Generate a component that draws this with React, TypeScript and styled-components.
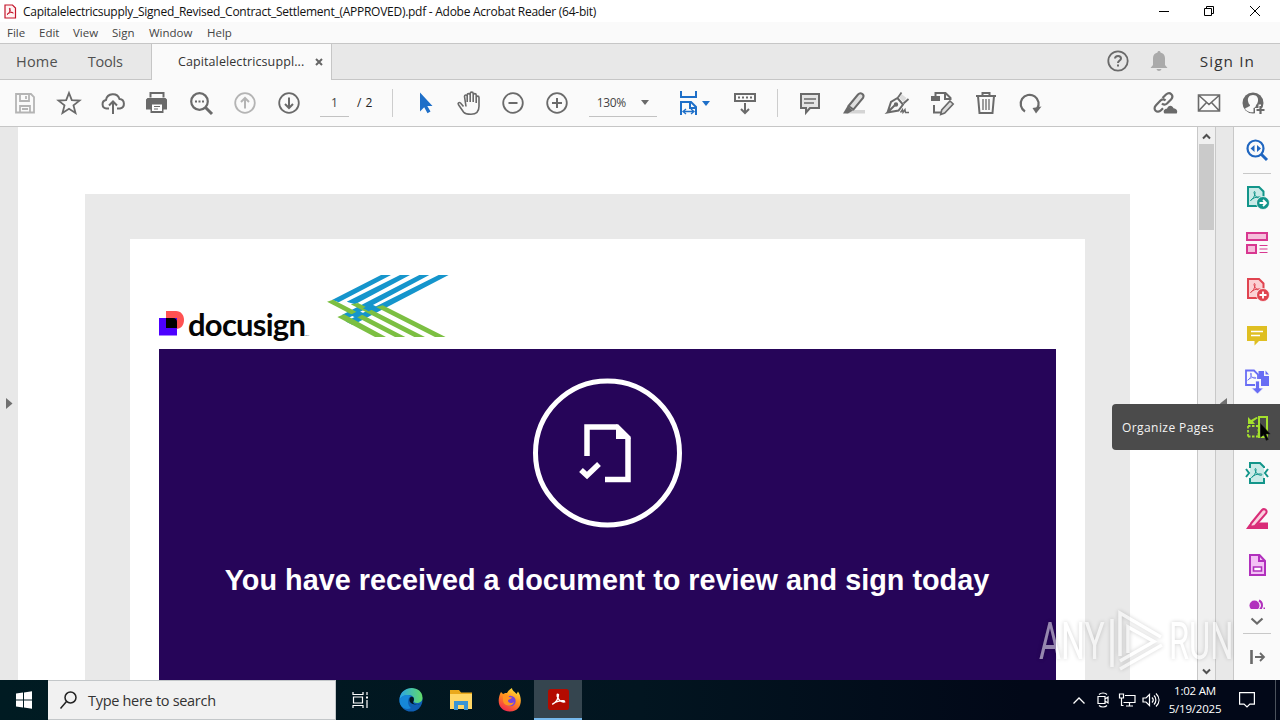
import React from "react";
import styled, { createGlobalStyle } from "styled-components";

const GlobalStyle = createGlobalStyle`
    * { box-sizing: border-box; }
    body {
        margin: 0;
        overflow: hidden;
        font-family: "Open Sans", "Noto Sans", sans-serif;
    }
    svg { display: block; flex: none; overflow: visible; }
`;

const Screen = styled.div`
    position: relative;
    display: flex;
    flex-direction: column;
    width: 1280px;
    height: 720px;
    overflow: hidden;
    background: #fff;
`;

const Text = styled.span<{ $size?: number; $spacing?: number; $color?: string }>`
    font-size: ${p => p.$size || 12}px;
    letter-spacing: ${p => p.$spacing || 0}px;
    color: ${p => p.$color || "#444"};
    line-height: 18px;
    white-space: pre;
`;

const Spacer = styled.div`
    flex: 1;
`;

/* title bar and menu */

const TitleBar = styled.div`
    display: flex;
    align-items: center;
    height: 22px;
    padding: 0 2px 0 4px;
`;

const Title = styled(Text)`
    margin-left: 7px;
    padding-top: 1px;
`;

const WindowButton = styled.div<{ $width?: number }>`
    display: flex;
    align-items: center;
    justify-content: center;
    width: ${p => p.$width || 46}px;
    height: 20px;
`;

const MenuBar = styled.div`
    display: flex;
    align-items: center;
    height: 22px;
    padding-left: 7px;
    background: #fafafa;
    border-bottom: 1px solid #c6c6c6;
`;

const MenuItem = styled(Text)<{ $width: number }>`
    width: ${p => p.$width}px;
`;

/* tabs */

const TabBar = styled.div`
    display: flex;
    height: 36px;
    background: #e8e8e8;
    border-bottom: 1px solid #c6c6c6;
`;

const NavTabs = styled.div`
    display: flex;
    align-items: center;
    gap: 30px;
    width: 152px;
    padding-left: 16px;
    border-right: 1px solid #c6c6c6;
`;

const DocumentTab = styled.div`
    display: flex;
    align-items: center;
    justify-content: space-between;
    width: 180px;
    height: 36px;
    padding: 0 8px 0 26px;
    background: #fafafa;
    border-right: 1px solid #c6c6c6;
`;

const Account = styled.div`
    display: flex;
    align-items: center;
    padding: 0 25px 2px 0;
`;

const AccountIcon = styled.div<{ $width: number }>`
    display: flex;
    width: ${p => p.$width}px;
`;

/* toolbar */

const Toolbar = styled.div`
    display: flex;
    align-items: center;
    height: 47px;
    padding: 0 5px 0 3px;
    background: #fafafa;
    border-bottom: 1px solid #c6c6c6;
`;

const ToolButton = styled.div<{ $width?: number }>`
    display: flex;
    align-items: center;
    justify-content: center;
    width: ${p => p.$width || 44}px;
    height: 40px;
`;

const FitButton = styled(ToolButton)`
    gap: 2px;
    padding-left: 10px;
`;

const Field = styled.div<{ $width: number }>`
    display: flex;
    align-items: center;
    justify-content: space-around;
    width: ${p => p.$width}px;
    height: 28px;
    border-bottom: 1px solid #c2c2c2;
`;

const PageField = styled(Field)`
    margin-left: 9px;
`;

const ZoomField = styled(Field)`
    margin-left: 10px;
`;

const PageCount = styled(Text)`
    width: 36px;
    padding-left: 8px;
`;

const Separator = styled.div<{ $left: number }>`
    width: 1px;
    height: 28px;
    margin: 0 10px 0 ${p => p.$left}px;
    background: #cdcdcd;
`;

/* document area */

const Body = styled.div`
    display: flex;
    height: 553px;
`;

const LeftRail = styled.div`
    display: flex;
    align-items: center;
    width: 18px;
    padding-left: 6px;
    background: #e8e8e8;
`;

const Viewport = styled.div`
    display: flex;
    width: 1179px;
    padding: 67px 67px 0;
    background: #fff;
    overflow: hidden;
`;

const Page = styled.div`
    flex: 1;
    padding: 45px 45px 0;
    background: #e9e9e9;
`;

const Letter = styled.div`
    height: 100%;
    padding: 34px 29px 0;
    background: #fff;
`;

const Logos = styled.div`
    display: flex;
    height: 76px;
`;

const DocusignName = styled.div`
    width: 136px;
    margin: 32px 0 0 4px;
    font-family: Lato, sans-serif;
    font-weight: 700;
    font-size: 31px;
    line-height: 38px;
    letter-spacing: -0.75px;
    color: #050505;
`;

const TradeMark = styled.sup`
    font-size: 2.5px;
    font-weight: 400;
    line-height: 0;
    letter-spacing: 0;
    vertical-align: baseline;
`;

const DocusignMark = styled.svg`
    margin-top: 38px;
`;

const StripesMark = styled.svg`
    margin-left: 1px;
`;

const Banner = styled.div`
    display: flex;
    flex-direction: column;
    align-items: center;
    height: 331px;
    padding-top: 29px;
    background: #260559;
`;

const Headline = styled.div`
    margin: 33px 1px 0 0;
    font: bold 28.8px/38px "Liberation Sans", Arial, sans-serif;
    color: #fff;
    white-space: nowrap;
`;

const ScrollTrack = styled.div`
    display: flex;
    flex-direction: column;
    align-items: center;
    justify-content: space-between;
    width: 19px;
    padding: 6px 0 5px;
    background: #f0f0f0;
    border-left: 1px solid #c8c8c8;
    border-right: 1px solid #c8c8c8;
`;

const ScrollThumb = styled.div`
    width: 15px;
    height: 86px;
    margin-top: 5px;
    background: #cacaca;
`;

const RightRail = styled.div`
    display: flex;
    align-items: center;
    width: 18px;
    padding-left: 4px;
    background: #e8e8e8;
    border-right: 1px solid #c8c8c8;
`;

const ToolPane = styled.div`
    width: 46px;
    background: #fafafa;
`;

const PaneItem = styled.div<{ $height?: number }>`
    display: flex;
    align-items: center;
    justify-content: center;
    height: ${p => p.$height || 46}px;
`;

const ActiveItem = styled(PaneItem)`
    position: relative;
    background: #4b4b4b;
`;

const ClippedItem = styled.div`
    display: flex;
    justify-content: center;
    height: 21px;
    padding-top: 12px;
    overflow: hidden;
`;

const Tooltip = styled.div`
    position: absolute;
    right: 46px;
    top: 0;
    display: flex;
    align-items: center;
    width: 122px;
    height: 46px;
    padding: 2px 0 0 10px;
    background: #4b4b4b;
    border-radius: 4px 0 0 4px;
`;

const Pointer = styled.svg`
    position: absolute;
    left: 26px;
    top: 19px;
`;

const PaneRule = styled.div`
    height: 1px;
    margin: 0 9px;
    background: #c8c8c8;
`;

const Watermark = styled.div`
    position: absolute;
    left: 1039px;
    top: 608px;
    display: flex;
    align-items: center;
    justify-content: space-between;
    width: 194px;
    height: 66px;
    opacity: 0.52;
    filter: drop-shadow(0 0 2px rgba(0, 0, 0, 0.35));
`;

const WatermarkWord = styled.span<{ $scale: number }>`
    width: 64px;
    padding-top: 2px;
    font: 400 51px/60px Roboto, sans-serif;
    color: #fff;
    transform: scaleX(${p => p.$scale});
    transform-origin: left center;
    white-space: nowrap;
`;

/* taskbar */

const Taskbar = styled.div`
    display: flex;
    height: 40px;
    background: linear-gradient(90deg, #001b22, #021520 50%, #020818 80%);
`;

const TaskButton = styled.div<{ $width?: number; $active?: boolean }>`
    display: flex;
    align-items: center;
    justify-content: center;
    width: ${p => p.$width || 49}px;
    background: ${p => p.$active ? "#35454f" : "none"};
    border-bottom: ${p => p.$active ? "2px solid #76b9ed" : "none"};
`;

const SearchBox = styled.div`
    display: flex;
    align-items: center;
    gap: 11px;
    width: 288px;
    padding: 1px 0 0 12px;
    background: #f1f1f1;
    border: 1px solid #c3c7c9;
    border-left: none;
`;

const Tray = styled.div`
    display: flex;
    align-items: center;
`;

const TrayIcon = styled.div`
    display: flex;
    justify-content: center;
    width: 24px;
`;

const Clock = styled.div`
    display: flex;
    flex-direction: column;
    align-items: center;
    width: 64px;
    padding-bottom: 1px;
`;

const ShowDesktop = styled.div`
    width: 5px;
    height: 40px;
    margin-left: 8px;
    border-left: 1px solid #4b525c;
`;

type IconProps = { color?: string; size?: number; width?: number; children: React.ReactNode };

const Icon = ({ color = "#6a6a6a", size = 24, width = 1.8, children }: IconProps) => (
    <svg width={size} height={size} viewBox="0 0 24 24" fill="none" stroke={color} strokeWidth={width}>
        {children}
    </svg>
);

const Caret = ({ color = "#6a6a6a" }) => (
    <svg width="8" height="5" viewBox="0 0 8 5"><path d="M0 0h8L4 5z" fill={color} /></svg>
);

const Adobe = ({ color }: { color: string }) => (
    <path d="M6.5 16.5c2.5-1.4 4.5-4.4 4.6-8 0-1.4-1.4-1.2-1.1.2.5 3 2.8 5.7 6.3 5.6 1.3-.3.6-1.4-.8-1.4-3.3 0-6.5.9-9 3.6z" stroke={color} strokeWidth="1" fill="none" />
);

const menu = [
    { title: "File", width: 32 },
    { title: "Edit", width: 34 },
    { title: "View", width: 39 },
    { title: "Sign", width: 37 },
    { title: "Window", width: 58 },
    { title: "Help", width: 30 }
];

const fileTools = [
    <Icon color="#b4b4b4"><path d="M3 3h15l3 3v15.500H3zM7 3v7h9V3M7 21v-6h10v6M13 5v3M9 18h6" /></Icon>,
    <Icon><path d="M12 2l2.800 7.200 7.700.400-6 4.800 2 7.500-6.500-4.200-6.500 4.200 2-7.500-6-4.800 7.700-.400z" /></Icon>,
    <Icon><path d="M8 17.500H5.500a4.300 4.300 0 0 1-.5-8.500 7 7 0 0 1 13.500-1 4.800 4.800 0 0 1 .5 9.500h-3M12 23V11M8 14.500l4-4 4 4" strokeWidth="2" /></Icon>,
    <Icon><path d="M5.500 6.500V2h13v4.500" strokeWidth="2" /><path d="M2.500 7h18l1.500 1.500v10h-3.500v3.500h-13v-3.500H1v-10z" fill="#6a6a6a" stroke="none" /><path d="M7 13.500h10v6.500H7z" fill="#fff" stroke="none" /><path d="M9 15.500h6M9 18h4" strokeWidth="1.200" /></Icon>,
    <Icon><circle cx="10.500" cy="10.500" r="8.300" strokeWidth="2.200" /><path d="M16.500 16.500l6.500 6.500" strokeWidth="3" /><path d="M6 10.500h2M9.500 10.500h2M13 10.500h2" strokeWidth="2" /></Icon>,
    <Icon color="#b4b4b4"><circle cx="12" cy="12" r="9.800" /><path d="M12 17.500V7M8 11l4-4 4 4" strokeWidth="2" /></Icon>,
    <Icon><circle cx="12" cy="12" r="9.800" /><path d="M12 6.500V17M8 13l4 4 4-4" strokeWidth="2" /></Icon>
];

const viewTools = [
    <Icon><path d="M7 1.500v19l4.200-4.200 3.300 5.900 3-1.600-3.200-5.600h5.200z" fill="#1e6fc8" stroke="none" /></Icon>,
    <Icon><path d="M6.500 15.500L3.500 12c-1.500-1.300-3 .3-2 1.700l5 7.300c1.500 2 4 2.300 7.500 2.300 5.500 0 8-3 8-8V6.500c0-1.800-2.800-1.800-2.800 0V12M19.200 8V4c0-1.800-3-1.800-3 0v7M16.200 4V2.500c0-1.800-3-1.800-3 0V11M13.200 4c0-1.800-3-1.800-3 0v7M10.200 5c-.5-1.500-2.800-1.200-2.700.5L9 15.500" strokeWidth="1.600" /></Icon>,
    <Icon><circle cx="12" cy="12" r="9.800" /><path d="M7.500 12h9" strokeWidth="2" /></Icon>,
    <Icon><circle cx="12" cy="12" r="9.800" /><path d="M7 12h10M12 7v10" strokeWidth="2" /></Icon>
];

const editTools = [
    <Icon><path d="M3 3h18v14H12l-4 4.500V17H3z" fill="#e4e4e4" strokeWidth="2" /><path d="M6 8h12M6 12h10" strokeWidth="1.300" /></Icon>,
    <Icon><path d="M9 19h14v3.500H4z" fill="#d4d4d4" stroke="none" /><path d="M6.500 15L16 3.500c2.500-2.500 7-.5 5 3.500l-9.500 11.500z" fill="#e0e0e0" strokeWidth="2" /><path d="M5.500 15l5.500 4.500L6 22.500H1z" fill="#6a6a6a" stroke="none" /></Icon>,
    <Icon><path d="M15.500 3l5 4-3 4-4-4z" fill="#ddd" stroke="none" /><path d="M1.500 21.500L5 11l6.500-4 5.500 6.500-4.500 6L1.500 21.500l7-7" strokeWidth="2" /><circle cx="10" cy="13.500" r="1.300" fill="#6a6a6a" /><path d="M12 6.500L15.500 1.500M17.500 12.500l5-4.500" strokeWidth="1.800" /><path d="M14.500 21.500l2-3 .500 3 2-3 .500 3h3.500" strokeWidth="1.400" /></Icon>,
    <Icon><path d="M5.500 5V2h10l5 5v2M15 2v6h5M4 14v7.500h7" strokeWidth="2" /><path d="M1 5h9v5H1z" fill="#6a6a6a" stroke="none" /><path d="M20 10l3.200 3-8.500 9-4 1.500 1-4.500z" fill="#ddd" strokeWidth="1.600" /></Icon>,
    <Icon><path d="M2 5h20M8.500 5V2h7v3M4 5l1.500 17h13L20 5" strokeWidth="2" /><path d="M9 8v11M12 8v11M15 8v11" strokeWidth="1.300" /></Icon>,
    <Icon><path d="M7 20.500A9 9 0 1 1 19 18" strokeWidth="2.200" /><path d="M14.500 17l9-1.500-5.500 7z" fill="#6a6a6a" stroke="none" /></Icon>
];

const shareTools = [
    <Icon><path d="M9.500 7l3.500-3.500c4-3.500 8.500 1 5 5l-4 4c-1.800 1.600-3.800 1.400-5 0M12.500 9.500c-1.300-1.400-3.400-1.500-5 0l-4.500 4.700c-4 4.100 1.300 8.900 5 5l2-2" strokeWidth="2.200" /><path d="M11.500 22.500c-2-2.500 0-5 2.500-4.800 1-4 5.500-4 6.500-.5 3.500.3 4.500 3 3.200 5.300z" fill="#6a6a6a" stroke="none" /></Icon>,
    <Icon><path d="M1.500 4h21v16h-21zM2 4.500l10 9 10-9M2 19.500l7.500-8M22 19.500l-7.500-8" strokeWidth="1.600" /></Icon>,
    <Icon>
        <circle cx="12" cy="12" r="10.500" fill="#6a6a6a" stroke="none" />
        <path d="M12 4c-4 0-5.500 3-5 6 .3 2 1 3 2 4 .3 2-4 2-5 4 2 2.500 5 3.500 8.500 3.300V17c2-.5 2.500-2 2.500-3 1-1 1.700-2 2-4 .5-3-1-6-5-6z" fill="#fafafa" stroke="none" />
        <path d="M17.500 13.500h2.500v3.500h4v7H14v-7h3.500z" fill="#fafafa" stroke="none" />
        <path d="M19.500 15v8M15.500 19h8" strokeWidth="2.200" />
    </Icon>
];

const BadgePage = ({ color, fill, plus }: { color: string; fill: string; plus?: boolean }) => (
    <Icon color={color}>
        <path d="M3 2h11l4.500 4.500V21H3z" fill={fill} strokeWidth="2" />
        <g transform="translate(-1 -1)"><Adobe color={color} /></g>
        <circle cx="18" cy="18" r="6.500" fill={color} stroke="#fafafa" strokeWidth=".8" />
        {plus
            ? <path d="M14.500 18h7M18 14.500v7" stroke="#fff" strokeWidth="1.800" />
            : <path d="M14.500 18h6M18 15l3 3-3 3" stroke="#fff" strokeWidth="1.800" />}
    </Icon>
);

const paneTools = [
    <BadgePage color="#12958a" fill="#c9eae7" />,
    <Icon color="#d83790"><path d="M2 2h20v7H2zM2 14h9v8H2z" fill="#f6bedb" strokeWidth="2" /><path d="M14.500 14.500h8M14.500 18h8M14.500 21.500h8" strokeWidth="1.200" /></Icon>,
    <BadgePage color="#e0434f" fill="#fbd0d3" plus />,
    <Icon><path d="M2 3h20v15h-8l-4.500 4.500V18H2z" fill="#dfbf22" stroke="none" /><path d="M6 8.500h12M6 12.500h9" stroke="#fff" strokeWidth="1.500" /></Icon>,
    <Icon color="#686df4"><path d="M10 16H1V1.500h8l4 4V10" strokeWidth="1.800" /><g transform="translate(-2.500 -2) scale(.8)"><Adobe color="#686df4" /></g><path d="M13.500 2H19v5h5v10h-8v-7h-2.500z" fill="#686df4" stroke="none" /><path d="M20.500 1.500L24 5.500h-3.500z" fill="#686df4" stroke="none" /><path d="M10.500 12h4v7h4l-6 6-6-6h4z" fill="#686df4" stroke="#fafafa" strokeWidth=".8" /></Icon>
];

const lowerTools = [
    <Icon color="#12958a"><path d="M5 2h10l4 4v15H5z" fill="#c9eae7" stroke="none" /><path d="M5 7V2h10l4 4v1M5 17v5h14v-5M1 8l3 4-3 4M23 8l-3 4 3 4" strokeWidth="2" /><Adobe color="#12958a" /></Icon>,
    <Icon color="#d92c78"><path d="M6 16.500L17 3c2-2 6 0 4 3.500L10 19l-5 1z" fill="#fbd0df" strokeWidth="2" /><path d="M1 22l3.500-5 4 4-1 1zM14 15.500h9V22H4l2.500-2.500H10z" fill="#d92c78" stroke="none" /></Icon>,
    <Icon color="#b130bd"><path d="M5 2h9.500l5.500 6v14H5z" fill="#f3c1f5" strokeWidth="2" /><path d="M14 2v6h6" strokeWidth="2" /><path d="M8.500 14h8v4h-8z" fill="#fff" strokeWidth="1.600" /></Icon>
];

const App = () => (
    <Screen>
        <GlobalStyle />
        <TitleBar>
            <svg width="12" height="15" viewBox="0 0 12 15">
                <path d="M1 1h7.500L11.500 4v10H1z" fill="#fff3f3" stroke="#c4152b" strokeWidth="1.200" />
                <path d="M3 10.500c3-1.500 3.500-5.500 2.800-6.500-1.300.3 1 5.200 3.500 5-.5-1.200-4.300-.7-6.300 1.500z" fill="none" stroke="#c4152b" />
            </svg>
            <Title $color="#111" $spacing={-0.265}>
                Capitalelectricsupply_Signed_Revised_Contract_Settlement_(APPROVED).pdf - Adobe Acrobat Reader (64-bit)
            </Title>
            <Spacer />
            <WindowButton $width={44}><svg width="10" height="10"><path d="M0 5.500h10" stroke="#000" /></svg></WindowButton>
            <WindowButton><svg width="10" height="10" fill="none" stroke="#000"><path d="M.5 2.500h7v7h-7zM2.500 2.500v-2h7v7h-2" /></svg></WindowButton>
            <WindowButton><svg width="10" height="10" stroke="#000"><path d="M0 0l10 10M10 0L0 10" /></svg></WindowButton>
        </TitleBar>
        <MenuBar>
            {menu.map(item => <MenuItem key={item.title} $width={item.width} $size={11.5}>{item.title}</MenuItem>)}
        </MenuBar>
        <TabBar>
            <NavTabs>
                <Text $size={14.5} $color="#505050" $spacing={0.2}>Home</Text>
                <Text $size={14.5} $color="#505050" $spacing={-0.2}>Tools</Text>
            </NavTabs>
            <DocumentTab>
                <Text $size={12.5} $color="#333" $spacing={0.1}>Capitalelectricsuppl...</Text>
                <svg width="8" height="8" stroke="#666" strokeWidth="2"><path d="M1 1l6 6M7 1L1 7" /></svg>
            </DocumentTab>
            <Spacer />
            <Account>
                <AccountIcon $width={41}>
                    <Icon><circle cx="12" cy="12" r="9.700" /><path d="M9 9.500c.2-3.500 6-3.400 6 0 0 2-3 2-3 4.500M12 15.500v2" strokeWidth="2" /></Icon>
                </AccountIcon>
                <AccountIcon $width={53}>
                    <Icon><path d="M3.500 19l2.500-3V9c0-3 2-5 4.500-5.500 0-2 3-2 3 0C16 4 18 6 18 9v7l2.500 3zM9.500 20h5c-.5 2.500-4.500 2.500-5 0z" fill="#aaa" stroke="none" /></Icon>
                </AccountIcon>
                <Text $size={15.3} $color="#333" $spacing={1.1}>Sign In</Text>
            </Account>
        </TabBar>
        <Toolbar>
            {fileTools.map((icon, i) => <ToolButton key={i}>{icon}</ToolButton>)}
            <PageField $width={29}><Text>1</Text></PageField>
            <PageCount $color="#222" $spacing={0.5}>/ 2</PageCount>
            <Separator $left={7} />
            {viewTools.map((icon, i) => <ToolButton key={i}>{icon}</ToolButton>)}
            <ZoomField $width={68}><Text $spacing={-0.4}>130%</Text><Caret /></ZoomField>
            <FitButton $width={62}>
                <Icon color="#1e6fc8"><path d="M5 0v6h15V0M5 24V11h10l5 5v8M14 11v6h6" strokeWidth="2" /><path d="M7 20.500h11M10 18l-3 2.500 3 2.500M15 18l3 2.500-3 2.500" strokeWidth="1.300" /></Icon>
                <Caret color="#1e6fc8" />
            </FitButton>
            <ToolButton $width={52}>
                <Icon><path d="M2 3h20v7H2z" strokeWidth="2" /><path d="M5 6.500h2M9 6.500h2M13 6.500h2M17 6.500h2M12 12v10M8 18l4 4 4-4" strokeWidth="2" /></Icon>
            </ToolButton>
            <Separator $left={6} />
            {editTools.map((icon, i) => <ToolButton key={i}>{icon}</ToolButton>)}
            <Spacer />
            {shareTools.map((icon, i) => <ToolButton key={i}>{icon}</ToolButton>)}
        </Toolbar>
        <Body>
            <LeftRail><svg width="7" height="11"><path d="M0 0l6.500 5.500L0 11z" fill="#707070" /></svg></LeftRail>
            <Viewport>
                <Page>
                    <Letter>
                        <Logos>
                            <DocusignMark width="25" height="25" viewBox="0 0 25 25">
                                <path d="M7 0h10c5 0 8 4 8 9s-3 9-8 9H7z" fill="#ff5252" />
                                <path d="M0 7h18v17.500H0z" fill="#4c00ff" />
                                <path d="M7 7h7c3 0 4 2 4 4v6H7z" fill="#000" />
                            </DocusignMark>
                            <DocusignName>docusign<TradeMark>TM</TradeMark></DocusignName>
                            <StripesMark width="125" height="66.600" viewBox="735 278 375 200">
                                <g fill="#1595cc">
                                    <path d="M903 284h30L776 366l-20-7zM960 284h30L825 372l-25-8zM1018 284h30L808 412l-24-7zM1076 284h30L818 434l-21-10z" />
                                </g>
                                <g fill="#7cbf42">
                                    <path d="M741 364l18-6L976 470h-31zM772 410l20-8 126 68h-33zM812 372l22-4 201 102h-32zM888 380l20-5 189 95h-32z" />
                                </g>
                                <path d="M835 391l18 9-24 13-18-9zM874 371l17 9-25 13-17-9z" fill="#1595cc" />
                            </StripesMark>
                        </Logos>
                        <Banner>
                            <svg width="150" height="150" viewBox="0 0 150 150" fill="none" stroke="#fff">
                                <circle cx="74.500" cy="75" r="72" strokeWidth="5" />
                                <path d="M54 78V49H84l11 11v41.500H72M48 92l6 5.500L66 86" strokeWidth="5.500" />
                                <path d="M83 46l15 15H83z" fill="#fff" stroke="none" />
                            </svg>
                            <Headline>You have received a document to review and sign today</Headline>
                        </Banner>
                    </Letter>
                </Page>
            </Viewport>
            <ScrollTrack>
                <div>
                    <svg width="15" height="6" fill="none" stroke="#505050" strokeWidth="2"><path d="M4 5.500L7.500 2 11 5.500" /></svg>
                    <ScrollThumb />
                </div>
                <svg width="15" height="6" fill="none" stroke="#505050" strokeWidth="2"><path d="M4 .5L7.500 4 11 .5" /></svg>
            </ScrollTrack>
            <RightRail><svg width="7" height="11"><path d="M7 0v11L0 5.500z" fill="#707070" /></svg></RightRail>
            <ToolPane>
                <PaneItem>
                    <Icon color="#1f66c0"><circle cx="10.500" cy="10.500" r="8" strokeWidth="2.200" /><path d="M16 16l6 6" strokeWidth="3" /><path d="M9.500 7v7l-4-3.500zM12 7v7l4-3.500z" fill="#1f66c0" stroke="none" /></Icon>
                </PaneItem>
                <PaneRule />
                {paneTools.map((icon, i) => <PaneItem key={i}>{icon}</PaneItem>)}
                <ActiveItem>
                    <Tooltip><Text $color="#f4f4f4" $spacing={0.42}>Organize Pages</Text></Tooltip>
                    <Icon color="#a4e02d"><path d="M14 6V2h8v20h-8z" strokeWidth="2" /><path d="M3 11h10M3 21.500h11M3 11v11M13.500 10v12" strokeDasharray="2.500 1.500" strokeWidth="1.800" /><path d="M3 2v7h7L8 6.500 13 3l-1.500-1L6 5z" fill="#a4e02d" stroke="none" /></Icon>
                    <Pointer width="11" height="19" viewBox="0 0 11 19"><path d="M.5.5v14l3.200-3 2.500 6 2.200-1-2.500-5.500h4.300z" fill="#000" stroke="#222" strokeWidth=".5" /></Pointer>
                </ActiveItem>
                {lowerTools.map((icon, i) => <PaneItem key={i}>{icon}</PaneItem>)}
                <ClippedItem>
                    <svg width="17" height="10"><circle cx="5.500" cy="5.500" r="5" fill="#b130bd" /><path d="M10 .5c4 2 4 7 0 10" fill="none" stroke="#b130bd" strokeWidth="2" /><path d="M14.500 7.500H16V9h-1.500z" fill="#b130bd" /></svg>
                </ClippedItem>
                <PaneItem $height={24}>
                    <svg width="12" height="7" fill="none" stroke="#6a6a6a" strokeWidth="2.200"><path d="M.5.5L6 5.500l5.500-5" /></svg>
                </PaneItem>
                <PaneRule />
                <PaneItem>
                    <svg width="10" height="16" fill="none" stroke="#6a6a6a" strokeWidth="1.800"><path d="M3 8h9M8 4l4 4-4 4" /><path d="M-.5 1v14" strokeWidth="2.600" /></svg>
                </PaneItem>
            </ToolPane>
        </Body>
        <Taskbar>
            <TaskButton $width={48}>
                <svg width="16" height="18" viewBox="0 0 16 18"><path d="M0 2.500L7 1.500v7H0zM8 1.400L16 .3v8.200H8zM0 9.500h7v7l-7-1zM8 9.500h8v8.200l-8-1.100z" fill="#fff" /></svg>
            </TaskButton>
            <SearchBox>
                <svg width="17" height="19" fill="none" stroke="#222" strokeWidth="1.500"><circle cx="10.500" cy="6.500" r="5.500" /><path d="M6.500 10.500L.5 17.500" /></svg>
                <Text $size={14.5} $color="#333" $spacing={-0.3}>Type here to search</Text>
            </SearchBox>
            <TaskButton $width={50}>
                <svg width="18" height="18" fill="none" stroke="#fff" strokeWidth="1.200"><path d="M1 1v2.500h10V1M1.500 6h9v6h-9zM1 17v-2.500h10V17M15 1v3M15 9v8" /><path d="M14 5.500h2v2h-2z" fill="#fff" stroke="none" /></svg>
            </TaskButton>
            <TaskButton $width={50}>
                <svg width="24" height="24" viewBox="0 0 24 24">
                    <defs>
                        <linearGradient id="edgeTop"><stop stopColor="#2aa4e8" /><stop offset="1" stopColor="#62dc69" /></linearGradient>
                    </defs>
                    <circle cx="12" cy="12" r="11.500" fill="#0f5fb4" />
                    <path d="M.5 12C1-3.500 23.500-3.500 23.500 10c0 5-6 6-9 4 1.500-3 0-7-4.500-7-4 0-8 1.500-9.500 5z" fill="url(#edgeTop)" />
                    <path d="M.5 12C2 6.500 9 6 12 8c-4 2-4 9 0 12-5 3-12-1-11.500-8z" fill="#1687d9" />
                    <path d="M14.500 9.500c-2-2-4.500 0-4 3 .5 3.500 6 5 11 3.500-3 1-7 .5-7.500-1.500.5-1.500 1.500-3 .5-5z" fill="#021520" />
                </svg>
            </TaskButton>
            <TaskButton>
                <svg width="22" height="20" viewBox="0 0 22 20">
                    <path d="M0 0h9l2 2.500h11V19H0z" fill="#e9a91c" />
                    <path d="M0 4h22v15H0z" fill="#ffd766" />
                    <path d="M4 11h14v9h-4v-5H8v5H4z" fill="#3995d3" />
                </svg>
            </TaskButton>
            <TaskButton>
                <svg width="24" height="24" viewBox="0 0 24 24">
                    <defs>
                        <linearGradient id="fox" x1=".8" y1="0" x2=".3" y2="1"><stop stopColor="#ffe63d" /><stop offset=".5" stopColor="#ff8c1e" /><stop offset="1" stopColor="#f3264f" /></linearGradient>
                    </defs>
                    <path d="M3 4l2 2c1-.5 2-1 4-1 1-2 3-4 5-5 0 3 3 3.500 4.500 6L20 3.500c5 7 4 20-8 20C0 23.500-1.500 12 3 4z" fill="url(#fox)" />
                    <circle cx="12.500" cy="13" r="5.200" fill="#7744dc" />
                    <path d="M5 7c3-1.500 6 0 6 2l3 .500c-1 2-4 1.500-4 3.500 1 3 5 2 6 1-1 5-10 5-11-1z" fill="#ff9421" />
                </svg>
            </TaskButton>
            <TaskButton $width={48} $active>
                <svg width="21" height="21" viewBox="0 0 22 22">
                    <rect width="22" height="22" rx="3" fill="#b30b00" />
                    <path d="M4.500 16c4-1.500 6.500-6 6.500-10-1.500-2-2.200 1-.5 3.500 1.500 3 4 4.500 7 4 0-2.500-9-1-13 2.500z" fill="none" stroke="#fff" strokeWidth="1.400" />
                </svg>
            </TaskButton>
            <Spacer />
            <Tray>
                <TrayIcon><svg width="12" height="7" fill="none" stroke="#fff" strokeWidth="1.300"><path d="M.5 6.500L6 1l5.500 5.500" /></svg></TrayIcon>
                <TrayIcon><svg width="12" height="16" fill="none" stroke="#fff" strokeWidth="1.200"><path d="M1 4.500h7v7H1zM8 7l3-2v6L8 9M2 2.500c2-2 6-2 8 0M2 13.500c2 2 6 2 8 0" /></svg></TrayIcon>
                <TrayIcon><svg width="17" height="14" fill="none" stroke="#fff" strokeWidth="1.200"><path d="M6 2.500h10v7H4.500M10.500 9.500v3M7 13h7M.5 1h4v4h-4zM2.500 5v7.500h2" /></svg></TrayIcon>
                <TrayIcon><svg width="18" height="14" fill="none" stroke="#fff" strokeWidth="1.200"><path d="M1 5h3l3.500-3.500v11L4 9H1zM10 4.500c1.500 1.500 1.500 3.500 0 5M12 2.500c2.500 2.500 2.500 6.500 0 9M14 .5c4 4 4 9 0 13" /></svg></TrayIcon>
                <Clock>
                    <Text $size={11.5} $color="#fff" $spacing={-0.2}>1:02 AM</Text>
                    <Text $size={11.5} $color="#fff" $spacing={-0.2}>5/19/2025</Text>
                </Clock>
                <ToolButton $width={40}><svg width="16" height="16" fill="none" stroke="#fff" strokeWidth="1.200"><path d="M.6.600h14.800v11.500h-4.500L8 15l-3-2.900H.6z" /></svg></ToolButton>
                <ShowDesktop />
            </Tray>
        </Taskbar>
        <Watermark>
            <WatermarkWord $scale={0.66}>ANY</WatermarkWord>
            <svg width="56" height="64" viewBox="0 0 56 64" fill="none" stroke="#fff" strokeWidth="3.500">
                <path d="M4 10v48M12 47V4l41 24M12 60l42-24M20 44V18l26 14.500L12 52" />
            </svg>
            <WatermarkWord $scale={0.64}>RUN</WatermarkWord>
        </Watermark>
    </Screen>
);

export default App;
